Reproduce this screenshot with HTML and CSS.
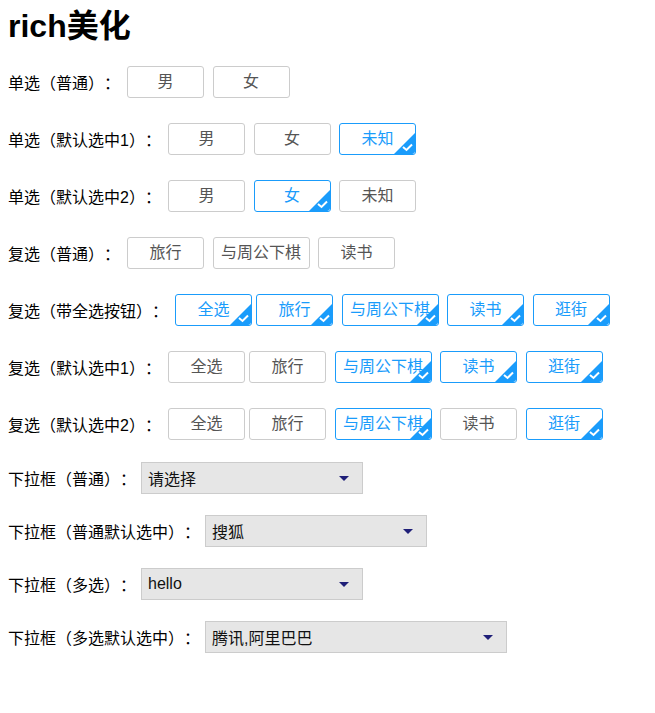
FILE: index.html
```html
<html>
    <head>
        <meta charset="utf-8">
        <link rel="stylesheet" href="styles.css">
    </head>
    <body>
        <h1>rich美化</h1>

        <div class="row">
            <span class="label label-a">单选（普通）：</span>
            <span class="opt">男</span>
            <span class="opt">女</span>
        </div>

        <div class="row">
            <span class="label label-b">单选（默认选中1）：</span>
            <span class="opt">男</span>
            <span class="opt">女</span>
            <span class="opt checked">未知<svg class="tick" viewBox="0 0 21 21"><path d="M21 0V18a3 3 0 0 1 -3 3H0Z"/><polyline points="9,14 12.5,17 18,11.5"/></svg></span>
        </div>

        <div class="row">
            <span class="label label-b">单选（默认选中2）：</span>
            <span class="opt">男</span>
            <span class="opt checked">女<svg class="tick" viewBox="0 0 21 21"><path d="M21 0V18a3 3 0 0 1 -3 3H0Z"/><polyline points="9,14 12.5,17 18,11.5"/></svg></span>
            <span class="opt">未知</span>
        </div>

        <div class="row">
            <span class="label label-a">复选（普通）：</span>
            <span class="opt">旅行</span>
            <span class="opt wide">与周公下棋</span>
            <span class="opt">读书</span>
        </div>

        <div class="row">
            <span class="label label-c">复选（带全选按钮）：</span>
            <span class="opt all checked">全选<svg class="tick" viewBox="0 0 21 21"><path d="M21 0V18a3 3 0 0 1 -3 3H0Z"/><polyline points="9,14 12.5,17 18,11.5"/></svg></span>
            <span class="opt checked">旅行<svg class="tick" viewBox="0 0 21 21"><path d="M21 0V18a3 3 0 0 1 -3 3H0Z"/><polyline points="9,14 12.5,17 18,11.5"/></svg></span>
            <span class="opt wide checked">与周公下棋<svg class="tick" viewBox="0 0 21 21"><path d="M21 0V18a3 3 0 0 1 -3 3H0Z"/><polyline points="9,14 12.5,17 18,11.5"/></svg></span>
            <span class="opt checked">读书<svg class="tick" viewBox="0 0 21 21"><path d="M21 0V18a3 3 0 0 1 -3 3H0Z"/><polyline points="9,14 12.5,17 18,11.5"/></svg></span>
            <span class="opt checked">逛街<svg class="tick" viewBox="0 0 21 21"><path d="M21 0V18a3 3 0 0 1 -3 3H0Z"/><polyline points="9,14 12.5,17 18,11.5"/></svg></span>
        </div>

        <div class="row">
            <span class="label label-b">复选（默认选中1）：</span>
            <span class="opt all">全选</span>
            <span class="opt">旅行</span>
            <span class="opt wide checked">与周公下棋<svg class="tick" viewBox="0 0 21 21"><path d="M21 0V18a3 3 0 0 1 -3 3H0Z"/><polyline points="9,14 12.5,17 18,11.5"/></svg></span>
            <span class="opt checked">读书<svg class="tick" viewBox="0 0 21 21"><path d="M21 0V18a3 3 0 0 1 -3 3H0Z"/><polyline points="9,14 12.5,17 18,11.5"/></svg></span>
            <span class="opt checked">逛街<svg class="tick" viewBox="0 0 21 21"><path d="M21 0V18a3 3 0 0 1 -3 3H0Z"/><polyline points="9,14 12.5,17 18,11.5"/></svg></span>
        </div>

        <div class="row">
            <span class="label label-b">复选（默认选中2）：</span>
            <span class="opt all">全选</span>
            <span class="opt">旅行</span>
            <span class="opt wide checked">与周公下棋<svg class="tick" viewBox="0 0 21 21"><path d="M21 0V18a3 3 0 0 1 -3 3H0Z"/><polyline points="9,14 12.5,17 18,11.5"/></svg></span>
            <span class="opt">读书</span>
            <span class="opt checked">逛街<svg class="tick" viewBox="0 0 21 21"><path d="M21 0V18a3 3 0 0 1 -3 3H0Z"/><polyline points="9,14 12.5,17 18,11.5"/></svg></span>
        </div>

        <div class="row row-select">
            <span class="label label-d">下拉框（普通）：</span>
            <div class="select">
                <span>请选择</span>
                <i class="arrow"></i>
            </div>
        </div>

        <div class="row row-select">
            <span class="label label-e">下拉框（普通默认选中）：</span>
            <div class="select">
                <span>搜狐</span>
                <i class="arrow"></i>
            </div>
        </div>

        <div class="row row-select">
            <span class="label label-d">下拉框（多选）：</span>
            <div class="select">
                <span>hello</span>
                <i class="arrow"></i>
            </div>
        </div>

        <div class="row row-select">
            <span class="label label-e">下拉框（多选默认选中）：</span>
            <div class="select select-wide">
                <span>腾讯,阿里巴巴</span>
                <i class="arrow"></i>
            </div>
        </div>
    </body>
</html>
```

FILE: styles.css
```css
body {
    margin: 8px;
    font-family: "Liberation Sans", "Noto Sans CJK SC", sans-serif;
    font-size: 15px;
    color: #000;
    background: #fff;
}
h1 {
    margin: 0 0 22px;
    font-size: 32px;
    line-height: 36px;
    font-weight: bold;
    color: #000;
}
.row {
    display: flex;
    align-items: center;
    height: 32px;
    margin-bottom: 25px;
}
.row-select {
    margin-top: -3px;
    margin-bottom: 24px;
}
.label {
    flex: none;
    white-space: nowrap;
    font-size: 16px;
    text-spacing-trim: space-all;
}
.label-a { width: 119px; }
.label-b { width: 160px; }
.label-c { width: 167px; }
.label-d { width: 133px; }
.label-e { width: 197px; }

/* option buttons */
.opt {
    position: relative;
    flex: none;
    box-sizing: border-box;
    width: 77px;
    height: 32px;
    margin-right: 8.5px;
    border: 1px solid #ccc;
    border-radius: 3px;
    line-height: 30px;
    font-size: 16px;
    text-align: center;
    color: #555;
    white-space: nowrap;
    overflow: hidden;
}
.opt.wide {
    width: 97px;
}
.opt.all {
    margin-right: 4px;
}
.opt.checked {
    border-color: #1a9cfb;
    color: #1a9cfb;
}
.tick {
    position: absolute;
    right: 0;
    bottom: 0;
    width: 21px;
    height: 21px;
}
.tick path {
    fill: #1a9cfb;
}
.tick polyline {
    fill: none;
    stroke: #fff;
    stroke-width: 2;
}

/* select boxes */
.select {
    display: flex;
    align-items: center;
    justify-content: space-between;
    box-sizing: border-box;
    width: 222px;
    height: 32px;
    padding: 0 13px 0 6px;
    background: #e6e6e6;
    border: 1px solid #ccc;
    font-size: 16px;
    color: #111;
}
.select-wide {
    width: 302px;
}
.arrow {
    width: 0;
    height: 0;
    border-left: 5px solid transparent;
    border-right: 5px solid transparent;
    border-top: 5px solid #1f1f78;
}
```
